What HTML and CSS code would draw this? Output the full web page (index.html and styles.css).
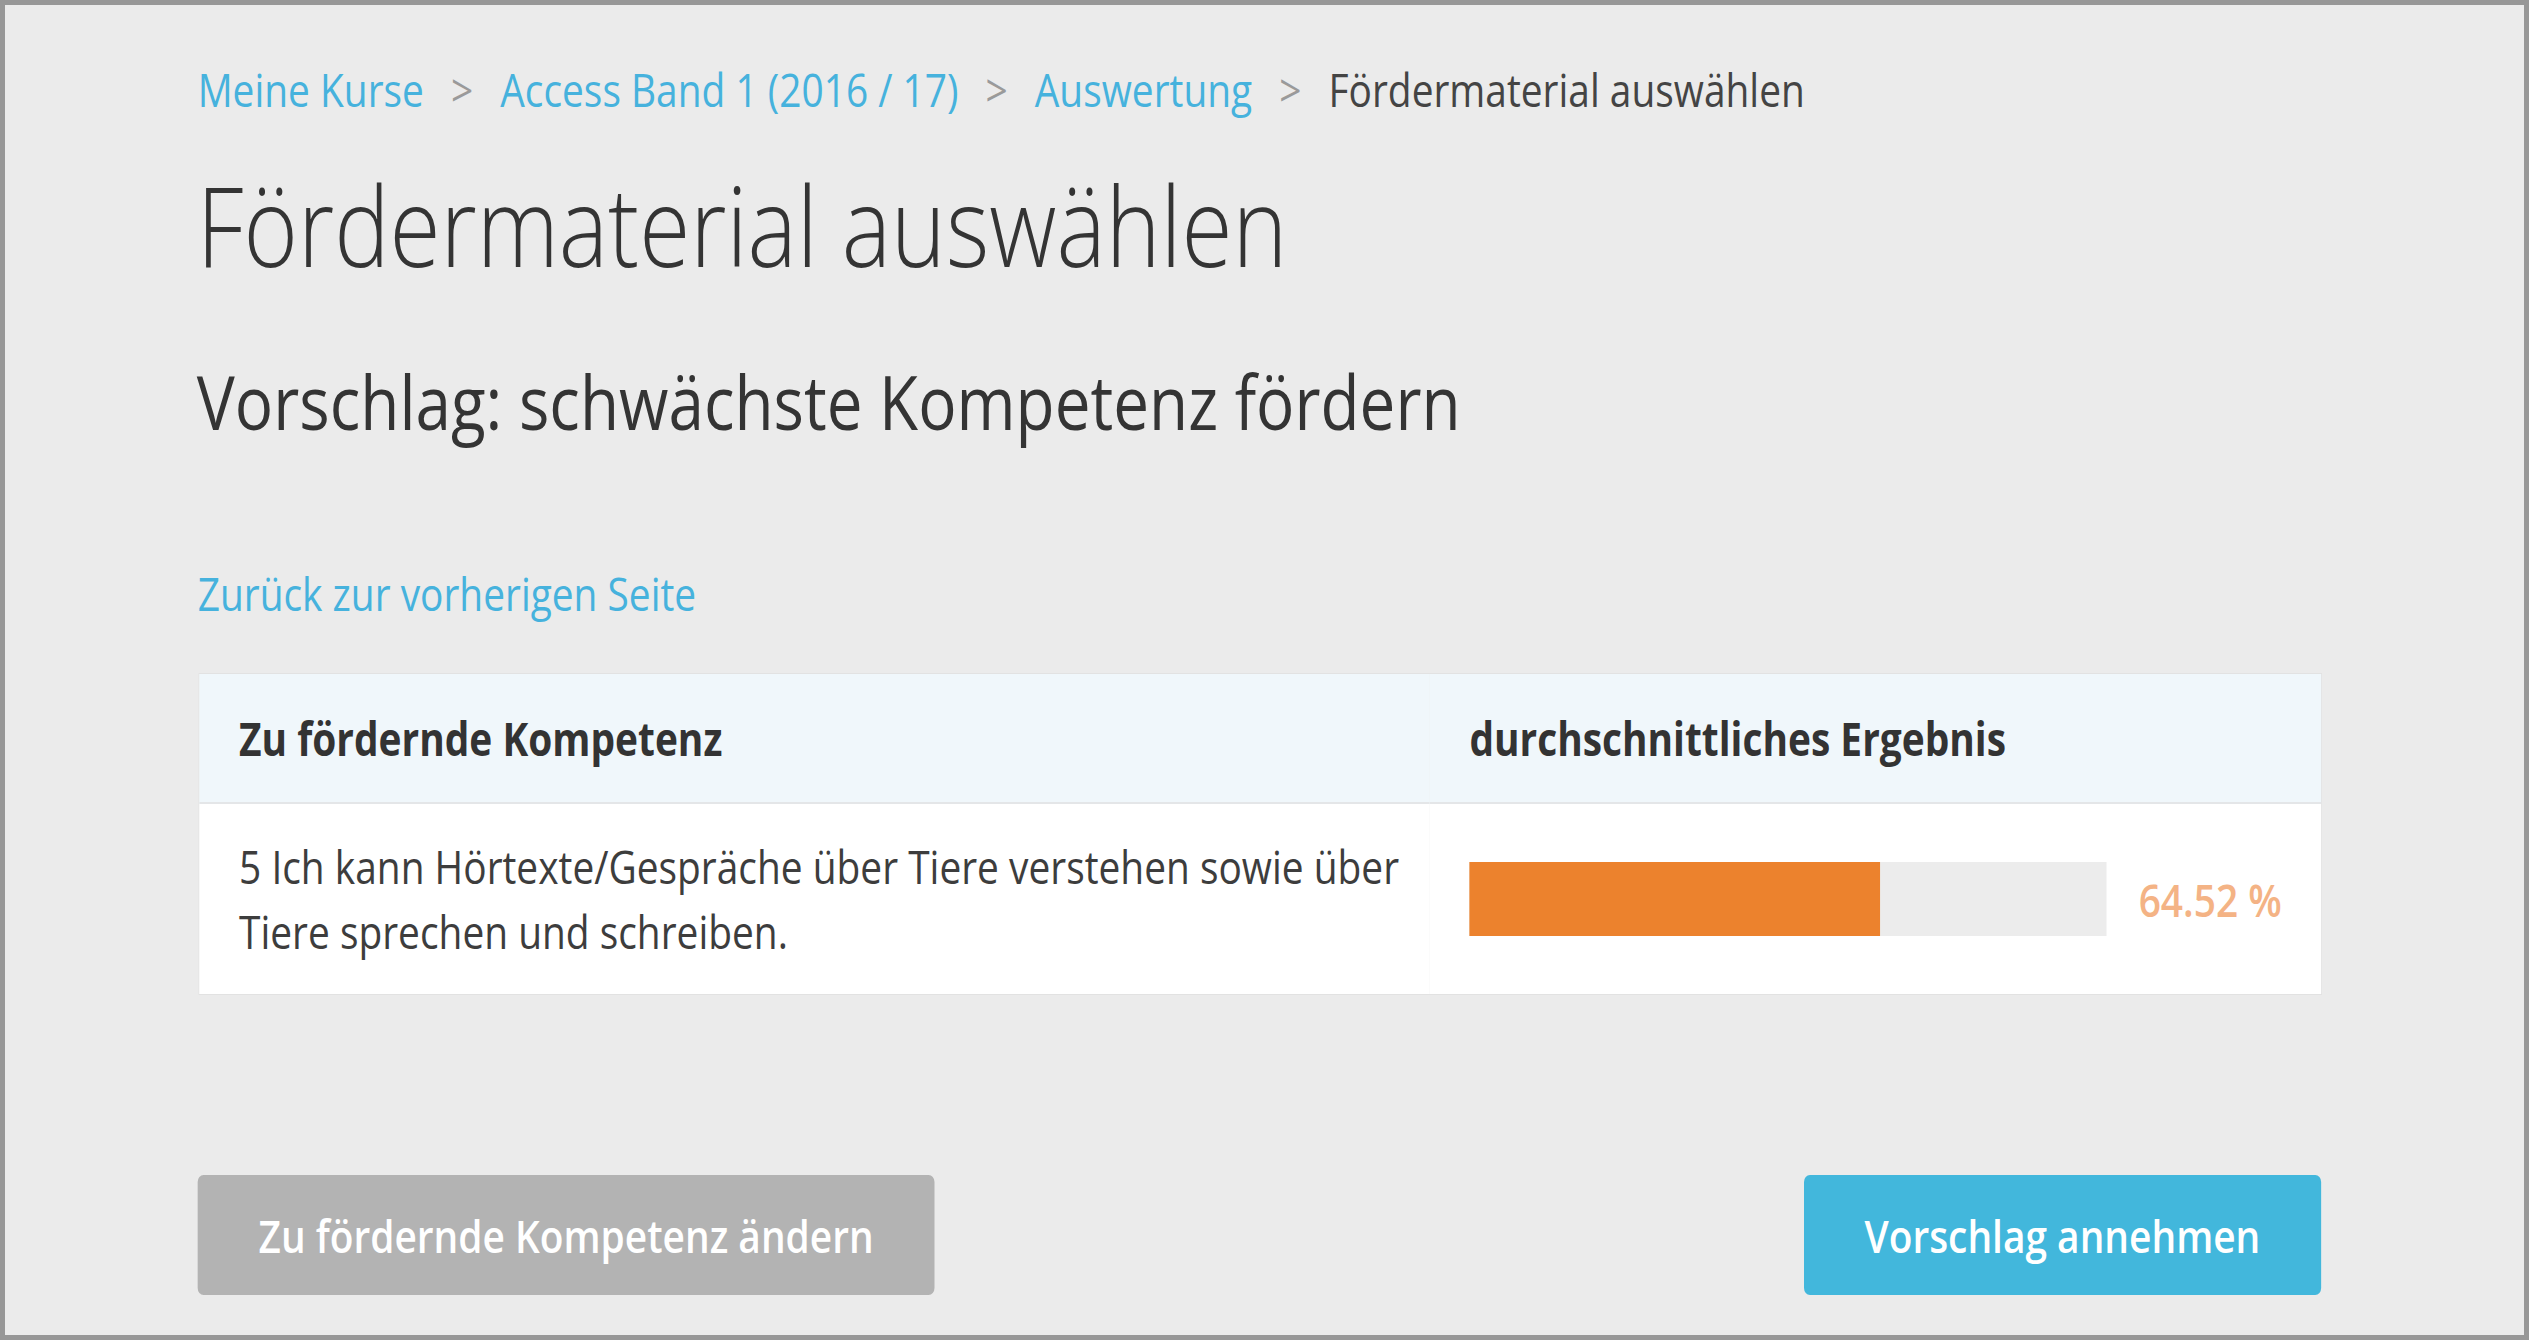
FILE: index.html
```html
<!DOCTYPE html>
<html lang="de">
<head>
<meta charset="utf-8">
<title>Fördermaterial auswählen</title>
<link rel="stylesheet" href="styles.css">
</head>
<body>
<div class="frame">
  <div class="page">
    <main class="content">
      <nav class="breadcrumb">
        <a class="crumb" href="#">Meine Kurse</a>
        <span class="sep">&gt;</span>
        <a class="crumb" href="#">Access Band 1 (2016 / 17)</a>
        <span class="sep">&gt;</span>
        <a class="crumb" href="#">Auswertung</a>
        <span class="sep">&gt;</span>
        <span class="crumb current">Fördermaterial auswählen</span>
      </nav>
      <h1 class="title">Fördermaterial auswählen</h1>
      <h2 class="subtitle">Vorschlag: schwächste Kompetenz fördern</h2>
      <a class="back" href="#">Zurück zur vorherigen Seite</a>
      <div class="table">
        <div class="cell head first">Zu fördernde Kompetenz</div>
        <div class="cell head second">durchschnittliches Ergebnis</div>
        <div class="cell body first">5 Ich kann Hörtexte/Gespräche über Tiere verstehen sowie über Tiere sprechen und schreiben.</div>
        <div class="cell body second">
          <div class="bar"><div class="fill" style="width:64.52%"></div></div>
          <span class="pct">64.52 %</span>
        </div>
      </div>
      <div class="actions">
        <button class="btn btn-gray" type="button">Zu fördernde Kompetenz ändern</button>
        <button class="btn btn-blue" type="button">Vorschlag annehmen</button>
      </div>
    </main>
  </div>
</div>
</body>
</html>
```
FILE: styles.css
```css
html, body {
  margin: 0;
  padding: 0;
}
body {
  background: #979797;
  padding: 5px;
  font-family: "Open Sans", "Noto Sans", sans-serif;
  font-size: 46px;
  line-height: 65.7px;
  color: #3a3a3a;
}
.frame {
  background: #ebebeb;
  height: 1330px;
  overflow: hidden;
}
/* the reference is rendered 0.845x narrower than tall */
.page {
  width: 2981px;
  transform: scaleX(0.845);
  transform-origin: 0 0;
}
.content {
  padding: 52px 0 0 230px;
  width: 2511px;
  display: flex;
  flex-direction: column;
}
.breadcrumb {
  display: flex;
  align-items: baseline;
  white-space: nowrap;
  margin-left: -2px;
}
.crumb {
  color: #46b2dd;
  text-decoration: none;
}
.crumb.current {
  color: #444;
}
.sep {
  color: #9a9a9a;
  margin: 0 32px;
}
.title {
  margin: 41px 0 0 -3px;
  font-size: 110px;
  font-weight: 300;
  line-height: 120px;
  color: #343434;
}
.subtitle {
  margin: 77px 0 0 -3px;
  font-size: 75.5px;
  font-weight: 400;
  line-height: 80px;
  color: #343434;
}
.back {
  margin: 120px 0 0 -2px;
  color: #46b2dd;
  text-decoration: none;
  align-self: flex-start;
}
.table {
  margin-top: 48px;
  display: grid;
  grid-template-columns: 1456px 1fr;
  box-shadow: 0 0 0 1px #e2e2e2;
}
.cell {
  display: flex;
  align-items: center;
  padding-left: 47px;
}
.head {
  height: 128px;
  background: #f0f7fb;
  font-weight: 700;
  color: #333;
  border-bottom: 2px solid #e4e6e8;
}
.body {
  height: 190px;
  background: #fff;
}
.body.first {
  color: #3d3d3d;
}
.body.second {
  padding-right: 43px;
  gap: 38px;
}
.bar {
  width: 754px;
  height: 74px;
  background: #ececec;
  flex: none;
}
.fill {
  height: 100%;
  background: #ec822d;
}
.pct {
  font-weight: 600;
  color: #f4b385;
  white-space: nowrap;
}
.actions {
  margin-top: 181px;
  display: flex;
  justify-content: space-between;
  margin-left: -2px;
}
.btn {
  height: 120px;
  padding: 0 72px;
  border: none;
  border-radius: 7px;
  font-family: inherit;
  font-size: 46px;
  font-weight: 600;
  color: #fff;
  cursor: pointer;
}
.btn-gray {
  background: #b3b3b3;
}
.btn-blue {
  background: #42b7dc;
}
```
